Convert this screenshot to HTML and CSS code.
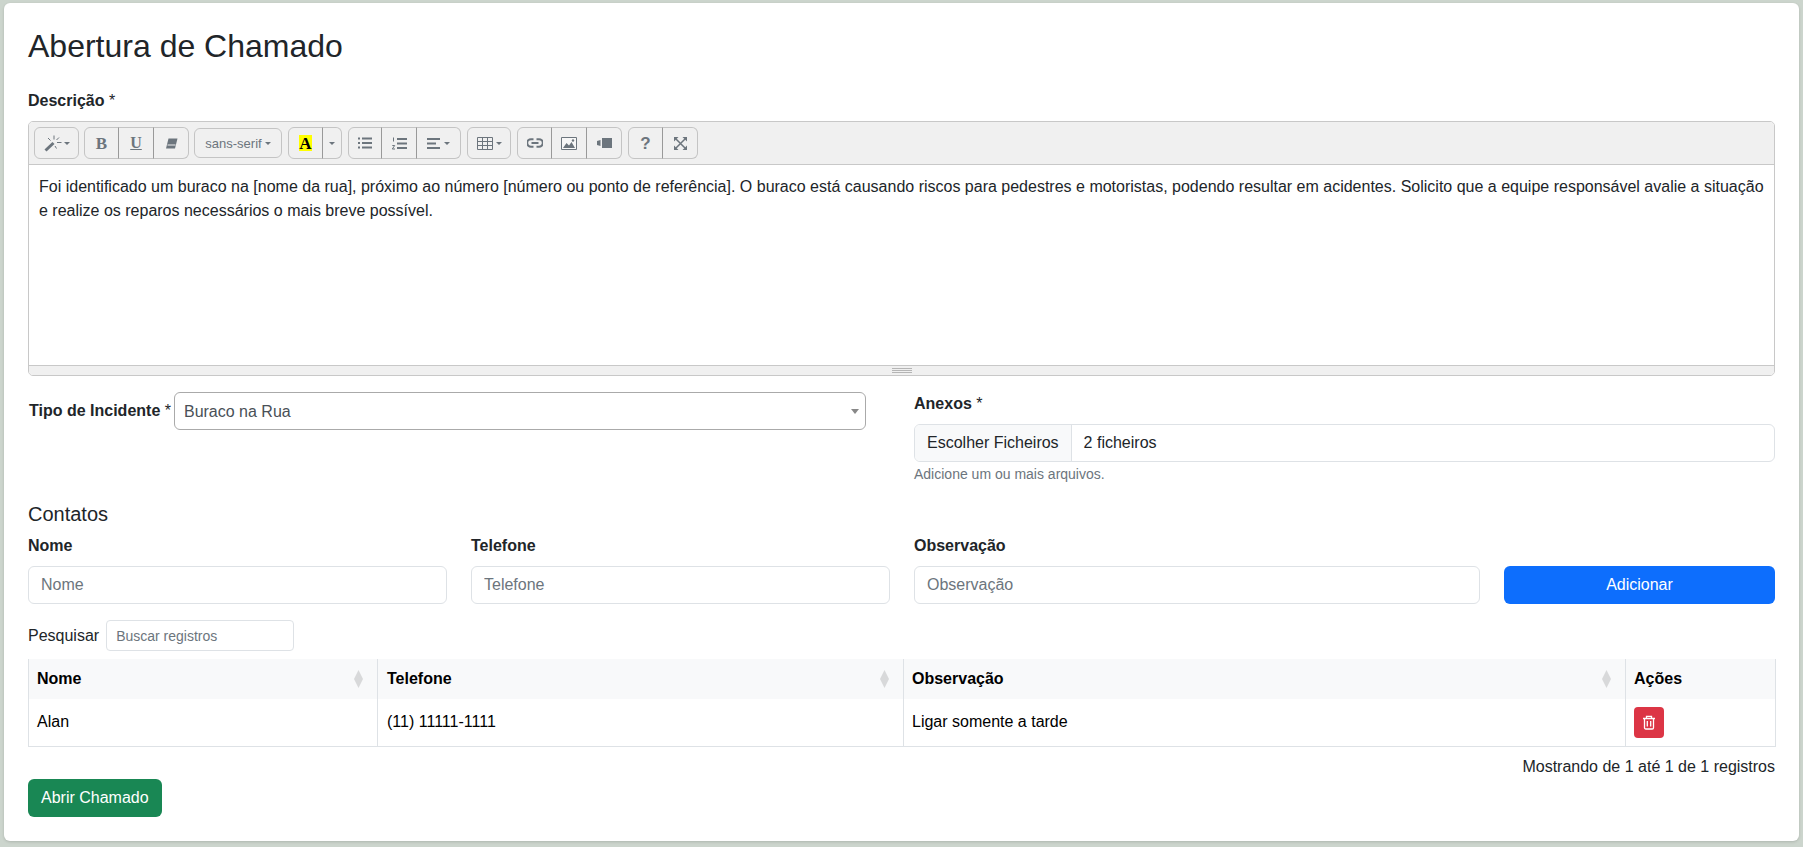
FILE: index.html
```html
<!DOCTYPE html>
<html lang="pt">
<head>
<meta charset="utf-8">
<title>Abertura de Chamado</title>
<link rel="stylesheet" href="styles.css">
</head>
<body>
<main class="card">
  <h1 class="title">Abertura de Chamado</h1>
  <label class="label desc-label">Descrição <span class="req">*</span></label>
  <section class="editor">
    <div class="toolbar">
      <div class="group"><button class="tb wide">
        <svg class="ic" width="19" height="17" viewBox="0 0 19 17"><path class="thick" d="M1.500 15.500 9.500 8"/><path class="thin" d="M10 .5v4M4 3l2.500 2.500M13 7.500h4.500M11 11l1.500 2.500M15 2.500l-2.500 2.500"/></svg><i class="caret"></i></button></div>
      <div class="group">
        <button class="tb"><span class="glyph-b">B</span></button>
        <button class="tb"><span class="glyph-u">U</span></button>
        <button class="tb"><svg class="ic" width="13" height="11" viewBox="0 0 13 11"><path class="solid" d="M3.500.5h9L10 10.500H1z"/><path class="cut" d="M2.500 7h8"/></svg></button>
      </div>
      <div class="group"><button class="tb font-btn">sans-serif<i class="caret"></i></button></div>
      <div class="group g6">
        <button class="tb"><span class="glyph-a">A</span></button>
        <button class="tb narrow"><i class="caret"></i></button>
      </div>
      <div class="group g6">
        <button class="tb first-34"><svg class="ic" width="14" height="12" viewBox="0 0 14 12"><path class="line" d="M0 1.500h2M4 1.500h10M0 6h2M4 6h10M0 10.500h2M4 10.500h10"/></svg></button>
        <button class="tb"><svg class="ic" width="15" height="13" viewBox="0 0 15 13"><path class="line" d="M5 2h10M5 6.500h10M5 11h10"/><path class="thin" d="M1.500.5v4M.3 8.500h2.400L.3 12h2.700"/></svg></button>
        <button class="tb align-btn"><svg class="ic" width="13" height="11" viewBox="0 0 13 11"><path class="line" d="M0 1h13M0 5.500h9M0 10h13"/></svg><i class="caret"></i></button>
      </div>
      <div class="group g6"><button class="tb table-btn"><svg class="ic" width="16" height="13" viewBox="0 0 16 13"><path class="grid-line" d="M.5.5h15v12H.5zM.5 4.500h15M.5 8.500h15M5.500.5v12M10.500.5v12"/></svg><i class="caret"></i></button></div>
      <div class="group g6">
        <button class="tb"><svg class="ic" width="16" height="10" viewBox="0 0 16 10"><path class="link" d="M6.500 1.200H4a3.800 3.800 0 0 0 0 7.600h2.500M9.500 1.200H12a3.800 3.800 0 0 1 0 7.600H9.500M4.500 5h7"/></svg></button>
        <button class="tb"><svg class="ic" width="16" height="13" viewBox="0 0 16 13"><path class="frame" d="M.5.500h15v12H.5z"/><path class="solid-fill" d="M2 11l3.500-5 2.500 2.500L10.500 5 14 11z"/><circle class="solid-fill" cx="12" cy="3.500" r="1.200"/></svg></button>
        <button class="tb"><svg class="ic" width="15" height="10" viewBox="0 0 15 10"><path class="solid-fill" d="M5 0h10v10H5zM0 3l3.500-1v6L0 7z"/></svg></button>
      </div>
      <div class="group g6">
        <button class="tb"><span class="glyph-q">?</span></button>
        <button class="tb"><svg class="ic" width="13" height="13" viewBox="0 0 13 13"><path class="thin2" d="M2 2l9 9M11 2l-9 9"/><path class="solid-fill" d="M0 0h4.500L0 4.500zM13 0v4.500L8.500 0zM0 13V8.500L4.500 13zM13 13H8.500L13 8.500z"/></svg></button>
      </div>
    </div>
    <div class="editable">Foi identificado um buraco na [nome da rua], próximo ao número [número ou ponto de referência]. O buraco está causando riscos para pedestres e motoristas, podendo resultar em acidentes. Solicito que a equipe responsável avalie a situação e realize os reparos necessários o mais breve possível.</div>
    <div class="statusbar"><span class="grip"></span></div>
  </section>

  <div class="incident-row">
    <div class="incident">
      <label class="label inline-label">Tipo de Incidente <span class="req">*</span></label>
      <div class="select"><span>Buraco na Rua</span><i class="select-caret"></i></div>
    </div>
    <div class="attach">
      <label class="label attach-label">Anexos <span class="req">*</span></label>
      <div class="file"><span class="file-btn">Escolher Ficheiros</span><span class="file-name">2 ficheiros</span></div>
      <div class="help">Adicione um ou mais arquivos.</div>
    </div>
  </div>

  <h2 class="subtitle">Contatos</h2>
  <div class="contact-form">
    <div class="field"><label class="label field-label">Nome</label><input class="input" placeholder="Nome"></div>
    <div class="field"><label class="label field-label">Telefone</label><input class="input" placeholder="Telefone"></div>
    <div class="field"><label class="label field-label">Observação</label><input class="input" placeholder="Observação"></div>
    <button class="btn btn-blue">Adicionar</button>
  </div>

  <div class="search"><span>Pesquisar</span><input class="search-input" placeholder="Buscar registros"></div>

  <table class="table">
    <colgroup><col class="c1"><col class="c2"><col class="c3"><col class="c4"></colgroup>
    <thead>
      <tr>
        <th><div class="th-in">Nome<svg class="sort" width="9" height="18" viewBox="0 0 9 18"><path d="M4.500 0 9 9 4.500 18 0 9z"/></svg></div></th>
        <th class="tel"><div class="th-in">Telefone<svg class="sort" width="9" height="18" viewBox="0 0 9 18"><path d="M4.500 0 9 9 4.500 18 0 9z"/></svg></div></th>
        <th><div class="th-in">Observação<svg class="sort" width="9" height="18" viewBox="0 0 9 18"><path d="M4.500 0 9 9 4.500 18 0 9z"/></svg></div></th>
        <th>Ações</th>
      </tr>
    </thead>
    <tbody>
      <tr>
        <td>Alan</td>
        <td class="tel">(11) 11111-1111</td>
        <td>Ligar somente a tarde</td>
        <td class="actions"><button class="del"><svg width="14" height="15" viewBox="0 0 14 15"><path class="trash" d="M1 3.500h12M4.500 3.500V1.300h5v2.200M2.500 3.500v9.200a1.300 1.300 0 0 0 1.300 1.300h6.400a1.300 1.300 0 0 0 1.300-1.300V3.500M5.300 6v5.500M8.700 6v5.500"/></svg></button></td>
      </tr>
    </tbody>
  </table>
  <div class="info">Mostrando de 1 até 1 de 1 registros</div>
  <button class="btn btn-green">Abrir Chamado</button>
</main>
</body>
</html>
```

FILE: styles.css
```css
* { box-sizing: border-box; }
html, body { margin: 0; height: 100%; }
body {
  background: #ccd5cd;
  padding: 3px 4px 6px;
  font-family: "Liberation Sans", Arial, sans-serif;
  font-size: 16px;
  line-height: 24px;
  color: #212529;
  overflow: hidden;
}
.card {
  background: #fff;
  border-radius: 6px;
  height: 838px;
  padding: 24px 24px 0;
  box-shadow: 0 1px 3px rgba(0, 0, 0, .15);
}
.title {
  margin: 0 0 24px;
  font-size: 32px;
  line-height: 38px;
  font-weight: 400;
}
.label { font-weight: 700; display: block; }
.req { font-weight: 400; }
.desc-label { margin: 0 0 8px; }
.editor {
  border: 1px solid #c8c8c8;
  border-radius: 5px;
  overflow: hidden;
}
.toolbar {
  display: flex;
  gap: 5px;
  align-items: center;
  height: 43px;
  padding: 0 5px;
  background: #f0f0f0;
  border-bottom: 1px solid #c8c8c8;
}
.group { display: flex; }
.g6 { margin-left: 1px; }
.tb {
  display: flex;
  align-items: center;
  justify-content: center;
  width: 35px;
  height: 32px;
  padding: 0;
  margin: 0;
  background: transparent;
  color: #6c757d;
  border: 1px solid #c4c4c4;
  border-left-width: 0;
  font-family: inherit;
}
.tb:first-child { border-left-width: 1px; border-radius: 6px 0 0 6px; }
.tb:last-child { border-radius: 0 6px 6px 0; }
.tb:only-child { border-radius: 6px; }
.tb + .tb { border-left: 1px solid #999; margin-left: -1px; width: 36px; }
.first-34 { width: 34px; }
.wide { width: 45px; gap: 1px; }
.font-btn { width: 88px; height: 30px; font-size: 13px; gap: 3px; }
.tb.narrow { width: 20px; }
.tb.align-btn { width: 45px; gap: 4px; }
.table-btn { width: 44px; gap: 3px; }
.caret {
  display: inline-block;
  width: 0;
  height: 0;
  border-left: 3px solid transparent;
  border-right: 3px solid transparent;
  border-top: 3px solid #6c757d;
}
.ic { display: block; flex: none; }
.thick { stroke: #6c757d; stroke-width: 3; fill: none; }
.thin { stroke: #6c757d; stroke-width: 1; fill: none; }
.thin2 { stroke: #6c757d; stroke-width: 1.5; fill: none; }
.solid { fill: #6c757d; }
.cut { stroke: #f0f0f0; stroke-width: 1; }
.line { stroke: #6c757d; stroke-width: 2; fill: none; }
.grid-line { stroke: #6c757d; stroke-width: 1; fill: none; }
.link { stroke: #6c757d; stroke-width: 2; fill: none; }
.frame { stroke: #6c757d; stroke-width: 1; fill: #f7f7f7; }
.solid-fill { fill: #6c757d; }
.glyph-b { font: 700 17px/1 "Liberation Serif", serif; }
.glyph-u { font: 700 16px/1 "Liberation Serif", serif; text-decoration: underline; }
.glyph-a {
  display: block;
  width: 13px;
  height: 16px;
  background: #ff0;
  color: #000;
  text-align: center;
  font: 700 17px/17px "Liberation Serif", serif;
}
.glyph-q { font: 700 17px/1 "Liberation Sans", sans-serif; }
.editable {
  height: 201px;
  padding: 10px;
  font-size: 16px;
  line-height: 24px;
  color: #212529;
  border-bottom: 1px solid #c8c8c8;
}
.statusbar {
  height: 9px;
  background: #f0f0f0;
  display: flex;
  justify-content: center;
  padding-top: 2px;
}
.grip {
  width: 20px;
  height: 5px;
  border-top: 1px solid #b5b5b5;
  border-bottom: 1px solid #b5b5b5;
  background: linear-gradient(#f0f0f0 1px, #b5b5b5 1px, #b5b5b5 2px, #f0f0f0 2px);
}
.incident-row {
  display: grid;
  grid-template-columns: 838px 861px;
  column-gap: 48px;
  margin-top: 16px;
  height: 110px;
}
.incident { display: flex; align-items: flex-start; }
.inline-label { margin: 7px 3px 0 1px; white-space: nowrap; }
.select {
  flex: 1;
  height: 38px;
  border: 1px solid #aaa;
  border-radius: 6px;
  padding: 1px 6px 0 9px;
  display: flex;
  align-items: center;
  justify-content: space-between;
  color: #495057;
}
.select-caret {
  width: 0;
  height: 0;
  border-left: 4px solid transparent;
  border-right: 4px solid transparent;
  border-top: 5px solid #888;
}
.attach-label { margin: 0 0 8px; }
.file {
  display: flex;
  height: 38px;
  border: 1px solid #dee2e6;
  border-radius: 6px;
  overflow: hidden;
}
.file-btn {
  padding: 6px 12px;
  background: #f8f9fa;
  border-right: 1px solid #dee2e6;
}
.file-name { padding: 6px 12px; }
.help { margin-top: 2px; font-size: 14px; line-height: 21px; color: #6c757d; }
.subtitle {
  margin: 0 0 8px;
  font-size: 20px;
  line-height: 24px;
  font-weight: 400;
}
.contact-form {
  display: grid;
  grid-template-columns: 419px 419px 566px 271px;
  column-gap: 24px;
  align-items: end;
}
.field-label { margin-bottom: 8px; }
.input {
  display: block;
  width: 100%;
  height: 38px;
  border: 1px solid #dee2e6;
  border-radius: 6px;
  padding: 6px 12px;
  font: inherit;
  color: #212529;
  outline: 0;
}
.input::placeholder, .search-input::placeholder { color: #6c757d; opacity: 1; }
.btn {
  display: block;
  height: 38px;
  border: 1px solid transparent;
  border-radius: 6px;
  color: #fff;
  font: inherit;
  padding: 6px 12px;
}
.btn-blue { background: #0d6efd; }
.btn-green { background: #198754; }
.search {
  display: flex;
  align-items: center;
  gap: 7px;
  margin-top: 16px;
}
.search-input {
  width: 188px;
  height: 31px;
  border: 1px solid #dee2e6;
  border-radius: 4px;
  padding: 4px 9px;
  font: 14px "Liberation Sans", sans-serif;
  outline: 0;
}
.table {
  width: 1747px;
  margin-top: 8px;
  border-collapse: collapse;
  table-layout: fixed;
  color: #000;
}
.c1 { width: 349px; }
.c2 { width: 526px; }
.c3 { width: 722px; }
.c4 { width: 150px; }
th {
  background: #f8f9fa;
  height: 40px;
  padding: 0 8px;
  text-align: left;
  font-weight: 700;
  border-left: 1px solid #dee2e6;
  border-right: 1px solid #dee2e6;
}
.th-in { display: flex; align-items: center; justify-content: space-between; padding-right: 6px; }
.sort { fill: #d8d9da; display: block; }
td {
  height: 47px;
  padding: 0 8px;
  border: 1px solid #dee2e6;
  border-top: 0;
}
th.tel, td.tel { padding-left: 9px; }
.del {
  display: flex;
  align-items: center;
  justify-content: center;
  width: 30px;
  height: 31px;
  padding: 0;
  border: 0;
  border-radius: 4px;
  background: #dc3545;
}
.trash { stroke: #fff; stroke-width: 1.300; fill: none; }
.info { margin-top: 8px; text-align: right; }
```
